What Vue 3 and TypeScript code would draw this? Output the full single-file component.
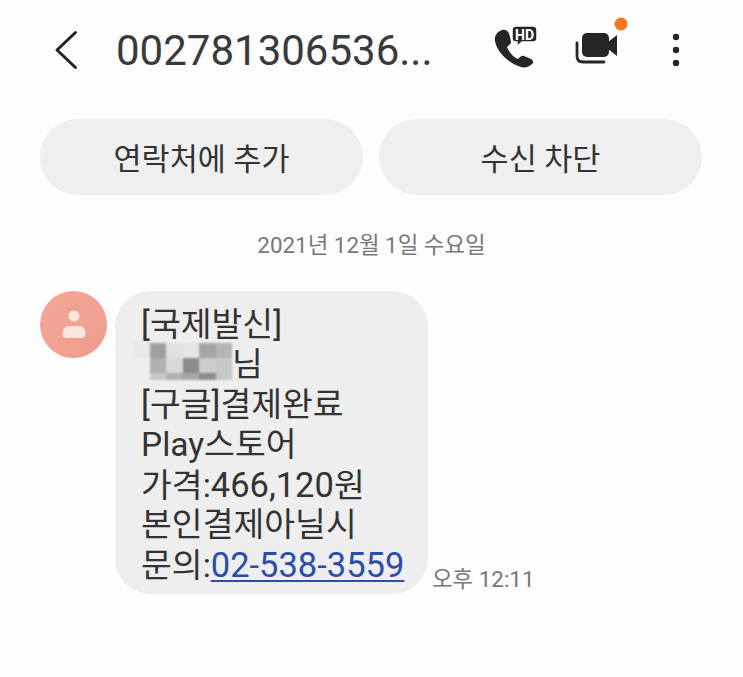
<template>
  <div class="screen">
    <header class="topbar">
      <button class="back" aria-label="뒤로">
        <svg width="26" height="40" viewBox="0 0 26 40" fill="none" stroke="#222" stroke-width="3" stroke-linecap="round" stroke-linejoin="round"><path d="M22.5 2.5 4 20l18.5 17.5"/></svg>
      </button>
      <h1 class="title">002781306536...</h1>
      <div class="actions">
        <svg class="ic-call" width="46" height="46" viewBox="12 15 46 46">
          <path fill="#252525" d="M22 20C27 19 29 22 30 27L31 32C31 34 29 35 27 37C29 42 33 47 38 49C40 47 42 45 44 46L51 49C53 50 54 53 52 54C49 57 45 58 41 57C28 53 17 42 15 31C14 26 17 22 22 20Z"/>
          <path fill="#252525" stroke="#fdfdfd" stroke-width="1.5" d="M36 16H53C55.500 16 57 17.500 57 20V28C57 30.500 55.500 32 53 32H42L37 36.500V32H36C33.500 32 32 30.500 32 28V20C32 17.500 33.500 16 36 16Z"/>
          <text x="44.500" y="29.500" class="hd" text-anchor="middle">HD</text>
        </svg>
        <svg class="ic-video" width="56" height="60" viewBox="0 0 56 60">
          <rect x="7" y="13" width="27" height="24" rx="5" fill="#252525"/>
          <path fill="#252525" d="M33 22 42 15V36L33 29Z"/>
          <path fill="none" stroke="#252525" stroke-width="2.800" stroke-linecap="round" d="M2 23V36C2 40 4 42 8 42H29"/>
          <circle cx="46" cy="4" r="6.500" fill="#f47621"/>
        </svg>
        <svg class="ic-more" width="8" height="34" viewBox="0 0 8 34" fill="#252525">
          <circle cx="4" cy="4" r="3.200"/><circle cx="4" cy="17" r="3.200"/><circle cx="4" cy="30" r="3.200"/>
        </svg>
      </div>
    </header>

    <div class="quick">
      <button class="pill">연락처에 추가</button>
      <button class="pill">수신 차단</button>
    </div>

    <div class="date">2021년 12월 1일 수요일</div>

    <div class="msg-row">
      <div class="avatar">
        <svg width="24" height="32" viewBox="0 0 24 32" fill="#fbe6df">
          <circle cx="12" cy="7" r="5.500"/>
          <path d="M7 17H17C21 17 23.500 20 23.500 25C23.500 28 21.500 29 18 29H6C2.500 29 .5 28 .5 25C.5 20 3 17 7 17Z"/>
        </svg>
      </div>
      <div class="bubble">
        <div class="line">[국제발신]</div>
        <div class="line name-line">
          <span class="blur" aria-hidden="true">
            <i v-for="(c, i) in blurCells" :key="i" :style="{ background: c }"></i>
          </span>님
        </div>
        <div class="line">[구글]결제완료</div>
        <div class="line">Play스토어</div>
        <div class="line">가격:<span class="num">466,120</span>원</div>
        <div class="line">본인결제아닐시</div>
        <div class="line">문의:<a class="num tel">02-538-3559</a></div>
      </div>
      <span class="time">오후 12:11</span>
    </div>
  </div>
</template>

<script setup lang="ts">
// mosaic over the recipient name
const blurCells: string[] = [
  '#e8e8e8', '#a0a0a0', '#e0e0e0', '#e6e6e6', '#a5a5a5', '#b5b5b5',
  '#eeeeee', '#b0b0b0', '#d8d8d8', '#8c8c8c', '#cccccc', '#c8c8c8',
  '#eeeeee', '#c8c8c8', '#b0b0b0', '#a8a8a8', '#8c8c8c', '#c8c8c8',
];
</script>

<style scoped>
.screen {
  width: 743px;
  height: 677px;
  overflow: hidden;
  background: #fdfdfd;
  font-family: Roboto, "Noto Sans CJK KR", sans-serif;
  color: #333;
}
.topbar {
  display: flex;
  align-items: center;
  height: 100px;
  padding-left: 53px;
}
.back {
  display: flex;
  padding: 0;
  border: 0;
  background: none;
}
.title {
  margin: 0 0 0 37px;
  font-size: 42px;
  font-weight: 400;
  color: #3a3a3a;
  white-space: nowrap;
}
.actions {
  display: flex;
  align-items: center;
  margin-left: auto;
  margin-right: 63px;
}
.ic-call { margin-bottom: 4px; }
.ic-video { margin-left: 37px; overflow: visible; }
.ic-more { margin-left: 41px; }
.hd {
  font-family: Roboto, sans-serif;
  font-size: 14px;
  font-weight: 700;
  fill: #fff;
}
.quick {
  display: flex;
  gap: 16px;
  padding: 19px 41px 0 40px;
}
.pill {
  flex: 1;
  height: 76px;
  border: 0;
  border-radius: 38px;
  background: #efefef;
  color: #333;
  font-family: inherit;
  font-size: 30.500px;
}
.date {
  margin-top: 35px;
  text-align: center;
  font-size: 22.400px;
  line-height: 30px;
  color: #777;
}
.msg-row {
  display: flex;
  align-items: flex-start;
  margin-top: 31px;
  padding-left: 40px;
}
.avatar {
  display: flex;
  align-items: center;
  justify-content: center;
  width: 67px;
  height: 67px;
  border-radius: 50%;
  background: linear-gradient(135deg, #f3a898, #ee9c8c);
}
.bubble {
  width: 313px;
  height: 303px;
  margin-left: 8px;
  padding: 14px 0 0 26px;
  box-sizing: border-box;
  border-radius: 36px;
  background: #eeeeee;
  font-size: 33.500px;
}
.line {
  height: 40px;
  line-height: 40px;
  white-space: nowrap;
}
.num { font-size: 34.500px; }
.name-line {
  display: flex;
  align-items: center;
}
.blur {
  display: grid;
  grid-template-columns: repeat(6, 16.500px);
  grid-template-rows: 15px 15px 7px;
  width: 99px;
  margin-left: -8px;
  margin-top: -8px;
  filter: blur(1px);
}
.tel {
  color: #2b4ea8;
  text-decoration: underline;
  text-underline-offset: 3px;
  text-decoration-thickness: 2px;
}
.time {
  align-self: flex-end;
  margin-left: 4px;
  font-size: 22.400px;
  line-height: 30px;
  color: #777;
}
</style>

<style>
body { background: #fdfdfd; }
</style>
